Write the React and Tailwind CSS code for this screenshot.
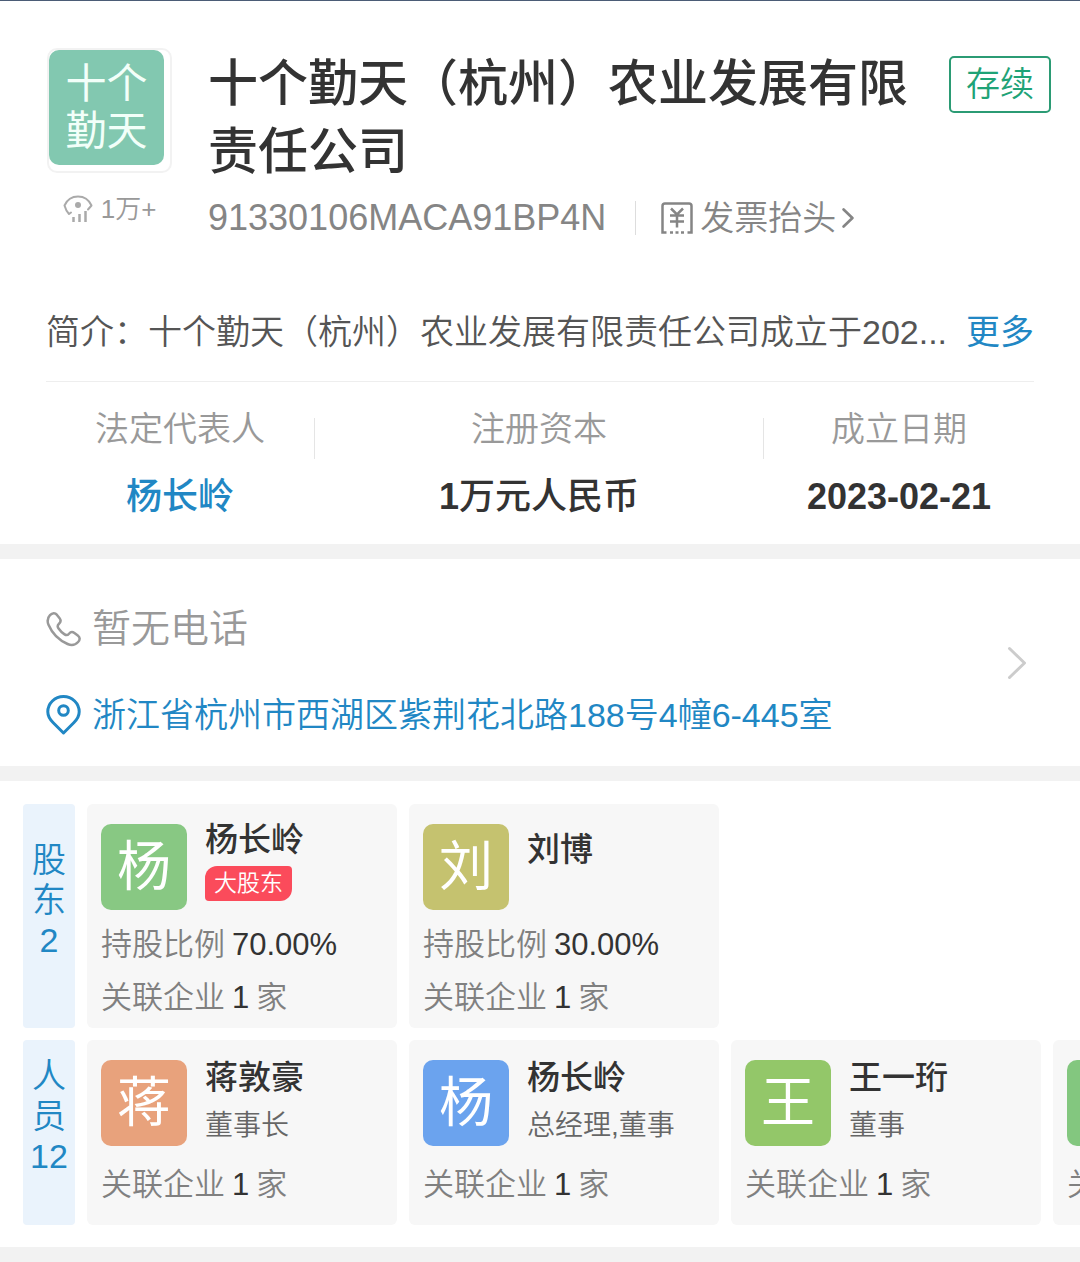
const COMPANY = {
  name: '十个勤天（杭州）农业发展有限责任公司',
  status: '存续',
  views: '1万+',
  creditCode: '91330106MACA91BP4N',
  intro: '简介：十个勤天（杭州）农业发展有限责任公司成立于202...',
  phone: '暂无电话',
  address: '浙江省杭州市西湖区紫荆花北路188号4幢6-445室',
}

const SHAREHOLDERS = [
  { name: '杨长岭', initial: '杨', color: 'bg-[#88c883]', badge: '大股东', ratio: '70.00%', related: 1 },
  { name: '刘博', initial: '刘', color: 'bg-[#c5c26f]', ratio: '30.00%', related: 1 },
]

const STAFF = [
  { name: '蒋敦豪', initial: '蒋', color: 'bg-[#e8a27c]', role: '董事长', related: 1 },
  { name: '杨长岭', initial: '杨', color: 'bg-[#6ba3ee]', role: '总经理,董事', related: 1 },
  { name: '王一珩', initial: '王', color: 'bg-[#93c769]', role: '董事', related: 1 },
  { name: '', initial: '', color: 'bg-[#83c77f]', role: '', related: 1 },
]

function EyeIcon() {
  return (
    <svg width="30" height="28" viewBox="0 0 30 28" fill="none" stroke="#aaaaaa" strokeWidth="2" aria-hidden="true">
      <path d="M8 17.500L6 19C4 17 2.500 14 1.500 10.500C4 5 9 1.500 15 1.500S26 5 28.500 10.500L25 14.500" strokeLinecap="round" strokeLinejoin="round" />
      <circle cx="15" cy="10" r="3" fill="#aaaaaa" stroke="none" />
      <path d="M10.500 22V27M16.500 19V27M22.500 16V27" strokeWidth="2.500" />
    </svg>
  )
}

function InvoiceIcon() {
  return (
    <svg width="34" height="34" viewBox="0 0 34 34" fill="none" stroke="#858585" strokeWidth="2.500" aria-hidden="true">
      <path d="M6.500 31.500H2.500V5C2.500 3.300 3.600 2.500 5 2.500H29C30.400 2.500 31.500 3.300 31.500 5V31.500H27.500" />
      <path d="M11 7.500L17 13.500L23 7.500M17 13.500V26.500M10 14.500H24M10 20.500H24" />
      <path d="M10 31.500H13M15.500 31.500H18.500M21 31.500H24" />
    </svg>
  )
}

function PhoneIcon() {
  return (
    <svg width="35" height="36" viewBox="0 0 35 36" fill="none" stroke="#999999" strokeWidth="2.500" strokeLinejoin="round" aria-hidden="true">
      <path d="M4 4.200C6.400 1.600 9 1.500 11 3.900L13.600 7.200C15.200 9.300 14.900 11 13 12.700C11.200 14.300 11.200 15.400 12.400 17.200C14.100 19.700 16.100 21.700 18.600 23.400C20.400 24.600 21.500 24.500 23 22.700C24.600 20.800 26.400 20.500 28.400 22L31.800 24.600C34.200 26.500 34.200 28.700 32.100 31C29.300 34 25.800 34.900 21.600 33C12.800 29.200 6.200 22.500 2.500 13.800C0.900 9.900 1.400 7 4 4.200Z" />
    </svg>
  )
}

function PinIcon() {
  return (
    <svg width="35" height="40" viewBox="0 0 35 40" fill="none" stroke="#2187c4" strokeWidth="3" strokeLinejoin="round" aria-hidden="true">
      <path d="M17.500 38L7 27.500C3.500 24 1.800 20.800 1.800 16.800C1.800 8.300 8.800 1.600 17.500 1.600S33.200 8.300 33.200 16.800C33.200 20.800 31.500 24 28 27.500Z" />
      <circle cx="17.500" cy="15.500" r="4.800" />
    </svg>
  )
}

function Chevron({ className, strokeWidth }) {
  return (
    <svg className={className} viewBox="0 0 20 34" fill="none" stroke="currentColor" strokeWidth={strokeWidth} strokeLinecap="round" strokeLinejoin="round" aria-hidden="true">
      <path d="M2.500 2.500L17.500 17L2.500 31.500" />
    </svg>
  )
}

function Stat({ label, children }) {
  return (
    <div className="text-center leading-[50px]">
      <dt className="text-[34px] font-[350] text-[#999]">{label}</dt>
      <dd className="mt-[18px] text-[36px] font-medium text-[#333]">{children}</dd>
    </div>
  )
}

function RowTag({ chars, count, className }) {
  return (
    <h2 className={`flex w-[52px] shrink-0 flex-col items-center rounded-sm bg-[#eaf3fc] text-[34px] leading-10 font-[350] text-[#2187c4] ${className}`}>
      {chars.map((c) => (
        <span key={c}>{c}</span>
      ))}
      <span>{count}</span>
    </h2>
  )
}

function PersonCard({ person }) {
  const hasSub = person.badge || person.role
  return (
    <li className="w-[310px] shrink-0 rounded-md bg-[#f7f7f7] px-3.5 pt-4">
      <div className="flex h-[90px] gap-[18px]">
        <div className={`mt-1 flex size-[86px] shrink-0 items-center justify-center rounded-[10px] text-[54px] leading-none text-white ${person.color}`}>
          {person.initial}
        </div>
        <div className={hasSub ? (person.role ? 'pt-0.5' : '') : 'pt-2.5'}>
          <h3 className="text-[33px] leading-10 font-medium whitespace-nowrap text-[#333]">{person.name}</h3>
          {person.badge && (
            <span className="mt-1.5 inline-block rounded-tl-xl rounded-tr-sm rounded-br-xl rounded-bl-sm bg-[#fb4b5b] px-[9px] text-[23px] leading-[35px] font-[350] text-white">
              {person.badge}
            </span>
          )}
          {person.role && (
            <p className="mt-1.5 text-[28px] leading-[44px] font-[350] whitespace-nowrap text-[#666]">{person.role}</p>
          )}
        </div>
      </div>
      <div className={`text-[31px] leading-[53px] font-[350] whitespace-nowrap text-[#808080] ${person.ratio ? 'mt-2 mb-1' : 'mt-3 mb-3.5'}`}>
        {person.ratio && (
          <p className="flex gap-[7px]">
            持股比例 <span className="text-[#333]">{person.ratio}</span>
          </p>
        )}
        <p className="flex gap-[7px]">
          关联企业 <span className="text-[#333]">{person.related}</span> 家
        </p>
      </div>
    </li>
  )
}

function Divider() {
  return <div className="h-[15px] bg-[#f2f2f2]" />
}

export default function App() {
  return (
    <main className="overflow-hidden border-t border-[#4b5c76] bg-white font-['Liberation_Sans','Noto_Sans_CJK_SC',sans-serif]">
      <header className="pt-[47px]">
        <div className="flex items-start pr-[29px] pl-[47px]">
          <div className="w-[125px] shrink-0">
            <div className="size-[125px] rounded-[10px] border-2 border-[#f2f2f2]">
              <div className="flex size-[115px] flex-col items-center justify-center rounded-[10px] bg-[#82c8b0] text-[41px] leading-[47px] text-[#f2fff9]">
                <span>十个</span>
                <span>勤天</span>
              </div>
            </div>
            <div className="mt-4 flex items-center justify-center gap-2 text-[26px] leading-10 font-[350] text-[#999]">
              <EyeIcon />
              {COMPANY.views}
            </div>
          </div>

          <div className="ml-9 min-w-0 flex-1">
            <h1 className="pt-0.5 text-[50px] leading-[68px] font-medium text-[#333]">{COMPANY.name}</h1>
            <div className="mt-2 flex items-center leading-[48px] text-[#858585]">
              <span className="text-[36px]">{COMPANY.creditCode}</span>
              <span className="mr-6 ml-[29px] h-[34px] w-px bg-[#ddd]" />
              <a href="#invoice" className="flex items-center text-[34px] font-[350]">
                <InvoiceIcon />
                <span className="mr-1.5 ml-1.5">发票抬头</span>
                <Chevron className="h-[20px] w-[12px]" strokeWidth={4.5} />
              </a>
            </div>
          </div>

          <span className="mt-2 shrink-0 rounded-[5px] border-2 border-[#2b9b74] px-[15px] text-[34px] leading-[53px] font-[350] text-[#1fa377]">
            {COMPANY.status}
          </span>
        </div>

        <div className="mx-[46px] mt-[65px] flex justify-between border-b border-[#eee] pb-6 text-[34px] leading-[50px]">
          <p className="truncate font-[350] text-[#555]">{COMPANY.intro}</p>
          <a href="#more" className="shrink-0 text-[#2187c4]">更多</a>
        </div>

        <dl className="mx-[46px] grid grid-cols-[268fr_1px_448fr_1px_270fr] items-start pt-[22px] pb-[22px]">
          <Stat label="法定代表人">
            <a href="#legal-person" className="text-[#2187c4]">杨长岭</a>
          </Stat>
          <div className="mt-3.5 h-[41px] bg-[#e5e5e5]" />
          <Stat label="注册资本">
            <span className="font-bold">1</span>万元人民币
          </Stat>
          <div className="mt-3.5 h-[41px] bg-[#e5e5e5]" />
          <Stat label="成立日期">
            <span className="font-bold">2023-02-21</span>
          </Stat>
        </dl>
      </header>

      <Divider />

      <section className="flex items-center justify-between pt-[42px] pr-[53px] pb-[26px] pl-[46px]">
        <div>
          <p className="flex items-center gap-[11px] text-[39px] leading-[56px] font-[350] text-[#999]">
            <PhoneIcon />
            {COMPANY.phone}
          </p>
          <a href="#address" className="mt-[33px] flex items-center gap-[11px] text-[34px] leading-[50px] font-[350] text-[#2187c4]">
            <PinIcon />
            {COMPANY.address}
          </a>
        </div>
        <button type="button" aria-label="查看联系方式" className="mb-4 text-[#ccc]">
          <Chevron className="h-[34px] w-[20px]" strokeWidth={3} />
        </button>
      </section>

      <Divider />

      <section className="flex flex-col gap-3 pt-[23px] pb-[22px] pl-[23px]">
        <div className="flex gap-3">
          <RowTag chars={['股', '东']} count={2} className="pt-9" />
          <ul className="flex gap-3">
            {SHAREHOLDERS.map((p) => (
              <PersonCard key={p.name} person={p} />
            ))}
          </ul>
        </div>
        <div className="flex gap-3">
          <RowTag chars={['人', '员']} count={12} className="pt-4" />
          <ul className="flex gap-3">
            {STAFF.map((p) => (
              <PersonCard key={p.name} person={p} />
            ))}
          </ul>
        </div>
      </section>

      <Divider />
    </main>
  )
}
